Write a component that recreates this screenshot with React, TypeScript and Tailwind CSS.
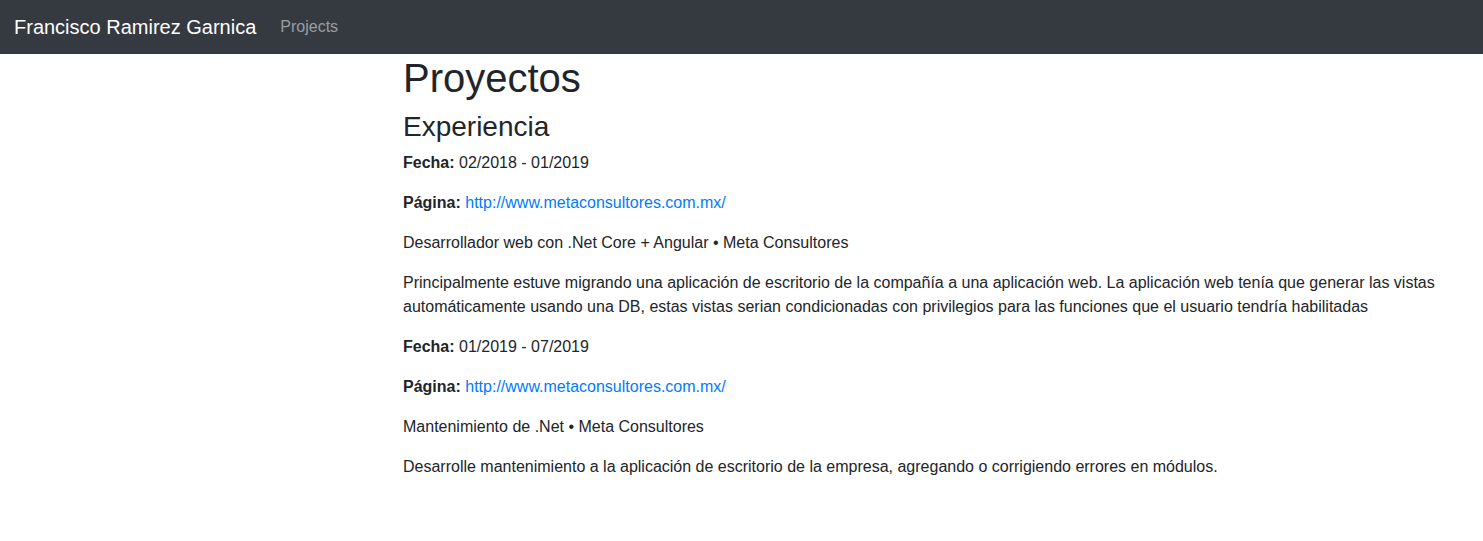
export default function App() {
  const font = { fontFamily: '"Liberation Sans", Arial, sans-serif' };
  return (
    <div className="min-h-screen bg-white text-[#212529] text-[16px] leading-[1.5]" style={font}>
      <nav className="h-[54px] bg-[#343a40] flex items-center pl-[14px]">
        <span className="text-white text-[20px] leading-[30px] mr-[16px] -mt-[1px]">Francisco Ramirez Garnica</span>
        <a className="text-[rgba(255,255,255,0.5)] text-[16px] px-[8px] leading-[24px]">Projects</a>
      </nav>
      <div className="flex">
        <div className="w-[388px] shrink-0" />
        <div className="flex-1 pl-[15px] pr-[15px]">
          <h1 className="text-[40px] leading-[1.2] font-normal mb-[8px]">Proyectos</h1>
          <h3 className="text-[28px] leading-[1.2] font-normal mb-[7px]">Experiencia</h3>
          <p className="mb-[16px]"><b className="font-bold">Fecha:</b> 02/2018 - 01/2019</p>
          <p className="mb-[16px]"><b className="font-bold">Página:</b> <a className="text-[#007bff]">http://www.metaconsultores.com.mx/</a></p>
          <p className="mb-[16px]">Desarrollador web con .Net Core + Angular • Meta Consultores</p>
          <p className="mb-[16px]">Principalmente estuve migrando una aplicación de escritorio de la compañía a una aplicación web. La aplicación web tenía que generar las vistas automáticamente usando una DB, estas vistas serian condicionadas con privilegios para las funciones que el usuario tendría habilitadas</p>
          <p className="mb-[16px]"><b className="font-bold">Fecha:</b> 01/2019 - 07/2019</p>
          <p className="mb-[16px]"><b className="font-bold">Página:</b> <a className="text-[#007bff]">http://www.metaconsultores.com.mx/</a></p>
          <p className="mb-[16px]">Mantenimiento de .Net • Meta Consultores</p>
          <p className="mb-[16px]">Desarrolle mantenimiento a la aplicación de escritorio de la empresa, agregando o corrigiendo errores en módulos.</p>
        </div>
      </div>
    </div>
  );
}
